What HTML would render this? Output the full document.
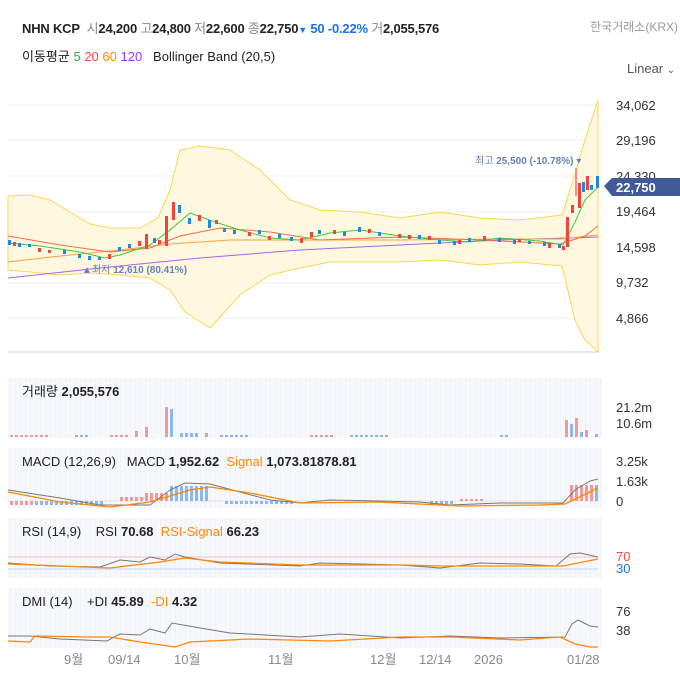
<!DOCTYPE html>
<html><head><meta charset="utf-8"><style>
body{margin:0;width:680px;height:697px;background:#fff;font-family:"Liberation Sans","Noto Sans CJK KR",sans-serif;overflow:hidden;position:relative}
.t{position:absolute;white-space:nowrap;font-size:13px;color:#222}
.g{color:#888;font-weight:normal}.b{font-weight:bold}
</style></head><body>
<div class="t b" style="left:22px;top:18px;font-size:13px;letter-spacing:-0.2px">NHN KCP&nbsp; <span class="g">시</span>24,200 <span class="g">고</span>24,800 <span class="g">저</span>22,600 <span class="g">종</span>22,750<span style="color:#1a73e8;font-size:9px">▼</span> <span style="color:#1a73e8">50 -0.22%</span> <span class="g">거</span>2,055,576</div>
<div class="t" style="right:2px;top:18px;color:#999;font-size:12px">한국거래소(KRX)</div>
<div class="t" style="left:22px;top:46px">이동평균 <span style="color:#2bb52b">5</span> <span style="color:#f44">20</span> <span style="color:#f80">60</span> <span style="color:#93f">120</span>&nbsp;&nbsp; Bollinger Band (20,5)</div>
<div class="t" style="left:627px;top:61px;color:#555">Linear <span style="font-size:10px">⌄</span></div>
<svg width="680" height="697" style="position:absolute;left:0;top:0" font-family="Liberation Sans,sans-serif" font-size="13">
<defs>
<pattern id="pr" width="5" height="10" patternUnits="userSpaceOnUse"><rect x="0" y="0" width="3" height="10" fill="#f19a9a"/></pattern>
<pattern id="pb" width="5" height="10" patternUnits="userSpaceOnUse"><rect x="0" y="0" width="3" height="10" fill="#8ab8f0"/></pattern>
<pattern id="bg" width="5" height="10" patternUnits="userSpaceOnUse"><rect width="5" height="10" fill="#f7f8fc"/><rect x="0" width="1" height="10" fill="#f1f2f8"/></pattern>
</defs>
<g stroke="#eef0f3"><line x1="8" y1="105" x2="598" y2="105"/><line x1="8" y1="140" x2="598" y2="140"/><line x1="8" y1="176" x2="598" y2="176"/><line x1="8" y1="212" x2="598" y2="212"/><line x1="8" y1="247" x2="598" y2="247"/><line x1="8" y1="283" x2="598" y2="283"/><line x1="8" y1="318" x2="598" y2="318"/></g>
<line x1="8" y1="352" x2="598" y2="352" stroke="#ccc"/>
<path d="M8,196 L30,195 L50,200 L70,212 L90,224 L110,228 L140,228 L158,218 L170,190 L180,150 L200,146 L230,150 L260,170 L290,200 L320,210 L360,212 L400,218 L440,212 L480,218 L520,220 L562,215 L570,190 L585,140 L598,100 L598,352 L585,340 L575,320 L562,266 L520,262 L480,265 L440,260 L400,262 L360,262 L330,262 L300,268 L270,275 L240,295 L210,328 L185,312 L170,290 L150,278 L120,275 L90,273 L60,275 L30,272 L8,270 Z" fill="#fff8e1" stroke="#ffd54f" stroke-width="1"/>
<polyline points="8,278 100,268 200,258 300,250 400,245 500,240 598,237" fill="none" stroke="#a463f2" stroke-width="1"/>
<polyline points="8,262 60,256 120,250 170,244 230,240 300,240 400,240 500,239 560,239 598,235" fill="none" stroke="#ffa040" stroke-width="1"/>
<polyline points="8,236 60,245 110,252 150,248 180,236 220,228 270,232 320,240 400,237 480,240 560,244 585,236 598,226" fill="none" stroke="#ff6b3d" stroke-width="1"/>
<polyline points="8,243 40,246 80,252 105,258 120,255 150,245 170,230 190,213 215,222 240,230 270,238 300,240 330,233 360,230 400,236 440,240 470,242 500,238 540,241 563,245 575,222 585,200 598,187" fill="none" stroke="#3cc83c" stroke-width="1"/>
<g fill="#1e88e5">
<rect x="8" y="240" width="3" height="5"/><rect x="18" y="243" width="3" height="4"/><rect x="28" y="244" width="3" height="3"/><rect x="63" y="250" width="3" height="4"/><rect x="78" y="254" width="3" height="4"/><rect x="88" y="256" width="3" height="4"/><rect x="98" y="257" width="3" height="3"/><rect x="118" y="247" width="3" height="4"/><rect x="128" y="244" width="3" height="4"/><rect x="153" y="238" width="3" height="5"/><rect x="178" y="205" width="3" height="8"/><rect x="188" y="218" width="3" height="6"/><rect x="208" y="220" width="3" height="8"/><rect x="223" y="228" width="3" height="4"/><rect x="233" y="230" width="3" height="4"/><rect x="258" y="230" width="3" height="4"/><rect x="278" y="234" width="3" height="4"/><rect x="290" y="237" width="3" height="4"/><rect x="318" y="230" width="3" height="4"/><rect x="343" y="232" width="3" height="4"/><rect x="358" y="227" width="3" height="5"/><rect x="378" y="232" width="3" height="4"/><rect x="418" y="235" width="3" height="4"/><rect x="438" y="240" width="3" height="4"/><rect x="453" y="241" width="3" height="4"/><rect x="468" y="238" width="3" height="4"/><rect x="498" y="238" width="3" height="4"/><rect x="513" y="240" width="3" height="4"/><rect x="528" y="241" width="3" height="3"/><rect x="543" y="242" width="3" height="4"/><rect x="558" y="244" width="3" height="4"/><rect x="582" y="182" width="3" height="10"/><rect x="590" y="185" width="3" height="5"/><rect x="596" y="176" width="3" height="12"/>
</g>
<g fill="#f4433b">
<rect x="13" y="242" width="3" height="4"/><rect x="38" y="248" width="3" height="4"/><rect x="48" y="250" width="3" height="3"/><rect x="108" y="254" width="3" height="5"/><rect x="138" y="241" width="3" height="5"/><rect x="145" y="234" width="3" height="15"/><rect x="158" y="240" width="3" height="4"/><rect x="165" y="216" width="3" height="30"/><rect x="172" y="202" width="3" height="18"/><rect x="198" y="215" width="3" height="6"/><rect x="215" y="220" width="3" height="4"/><rect x="248" y="232" width="3" height="4"/><rect x="268" y="236" width="3" height="4"/><rect x="300" y="238" width="3" height="5"/><rect x="310" y="232" width="3" height="5"/><rect x="333" y="230" width="3" height="4"/><rect x="368" y="229" width="3" height="4"/><rect x="398" y="234" width="3" height="4"/><rect x="408" y="235" width="3" height="4"/><rect x="428" y="236" width="3" height="4"/><rect x="458" y="240" width="3" height="4"/><rect x="483" y="236" width="3" height="5"/><rect x="518" y="239" width="3" height="3"/><rect x="548" y="243" width="3" height="5"/><rect x="562" y="246" width="3" height="4"/><rect x="566" y="217" width="3" height="30"/><rect x="571" y="205" width="3" height="8"/><rect x="575" y="168" width="2" height="28" fill="#f88"/><rect x="578" y="183" width="3" height="25"/><rect x="586" y="176" width="3" height="14"/>
</g>
<text x="475" y="164" font-size="10" fill="#6a7fb5">최고 <tspan font-weight="bold">25,500 (-10.78%)</tspan> ▾</text>
<text x="82" y="273" font-size="10" fill="#6a7fb5">▲최저 <tspan font-weight="bold">12,610 (80.41%)</tspan></text>
<g fill="#333"><text x="616" y="110">34,062</text><text x="616" y="145">29,196</text><text x="616" y="181">24,330</text><text x="616" y="216">19,464</text><text x="616" y="252">14,598</text><text x="616" y="287">9,732</text><text x="616" y="323">4,866</text></g>
<path d="M604,186 L612,178 L680,178 L680,196 L612,196 Z" fill="#3f5a96"/>
<text x="616" y="192" fill="#fff" font-weight="bold">22,750</text>
<g fill="url(#bg)"><rect x="8" y="378" width="594" height="60"/><rect x="8" y="448" width="594" height="60"/><rect x="8" y="518" width="594" height="60"/><rect x="8" y="588" width="594" height="60"/></g>
<text x="22" y="396" fill="#222">거래량 <tspan font-weight="bold">2,055,576</tspan></text>
<g fill="url(#pr)"><rect x="8" y="435" width="40" height="2"/><rect x="110" y="435" width="20" height="2"/><rect x="135" y="431" width="5" height="6"/><rect x="145" y="427" width="5" height="10"/><rect x="165" y="407" width="5" height="30"/><rect x="205" y="433" width="5" height="4"/><rect x="310" y="435" width="25" height="2"/><rect x="565" y="420" width="5" height="17"/><rect x="575" y="418" width="5" height="19"/><rect x="585" y="430" width="5" height="7"/></g>
<g fill="url(#pb)"><rect x="75" y="435" width="15" height="2"/><rect x="220" y="435" width="30" height="2"/><rect x="170" y="409" width="5" height="28"/><rect x="180" y="433" width="20" height="4"/><rect x="350" y="435" width="40" height="2"/><rect x="500" y="435" width="10" height="2"/><rect x="570" y="424" width="5" height="13"/><rect x="580" y="432" width="5" height="5"/><rect x="595" y="434" width="5" height="3"/></g>
<g fill="#333"><text x="616" y="412">21.2m</text><text x="616" y="428">10.6m</text></g>
<text x="22" y="466" fill="#222">MACD (12,26,9)&nbsp;&nbsp; MACD <tspan font-weight="bold">1,952.62</tspan>&nbsp;&nbsp;<tspan fill="#f80">Signal</tspan> <tspan font-weight="bold">1,073.81878.81</tspan></text>
<line x1="8" y1="501" x2="598" y2="501" stroke="#e4e4e4"/>
<g fill="url(#pr)"><rect x="8" y="501" width="25" height="4"/><rect x="120" y="497" width="25" height="4"/><rect x="145" y="493" width="25" height="8"/><rect x="570" y="485" width="25" height="16"/><rect x="255" y="501" width="20" height="3"/><rect x="460" y="499" width="25" height="2"/></g>
<g fill="url(#pb)"><rect x="35" y="501" width="70" height="4"/><rect x="170" y="486" width="40" height="15"/><rect x="225" y="501" width="70" height="3"/><rect x="430" y="501" width="25" height="3"/><rect x="595" y="485" width="5" height="16"/></g>
<polyline points="8,490 60,498 100,505 150,505 170,490 185,483 210,484 240,492 270,500 300,503 330,500 380,501 420,502 450,505 500,503 540,503 563,503 575,490 590,481 598,479" fill="none" stroke="#777" stroke-width="1"/>
<polyline points="8,492 60,502 110,507 150,502 190,490 210,487 250,493 300,503 380,502 460,506 540,505 565,504 598,488" fill="none" stroke="#f80" stroke-width="1.3"/>
<g fill="#333"><text x="616" y="466">3.25k</text><text x="616" y="486">1.63k</text><text x="616" y="506">0</text></g>
<text x="22" y="536" fill="#222">RSI (14,9)&nbsp;&nbsp;&nbsp; RSI <tspan font-weight="bold">70.68</tspan>&nbsp;&nbsp;<tspan fill="#f80">RSI-Signal</tspan> <tspan font-weight="bold">66.23</tspan></text>
<line x1="8" y1="557" x2="598" y2="557" stroke="#f4c0c0"/><line x1="8" y1="569" x2="598" y2="569" stroke="#c0d4f4"/>
<polyline points="8,563 50,566 100,567 120,560 140,562 150,557 165,560 175,554 185,557 220,563 300,566 320,563 360,564 400,565 440,568 480,563 520,564 556,566 570,554 580,553 598,557" fill="none" stroke="#777" stroke-width="1"/>
<polyline points="8,564 60,566 110,568 160,562 185,558 220,562 300,565 400,565 440,566 520,566 563,566 598,559" fill="none" stroke="#f80" stroke-width="1.3"/>
<text x="616" y="561" fill="#f44">70</text><text x="616" y="573" fill="#1a73e8">30</text>
<text x="22" y="606" fill="#222">DMI (14)&nbsp;&nbsp;&nbsp; +DI <tspan font-weight="bold">45.89</tspan>&nbsp;&nbsp;<tspan fill="#f80">-DI</tspan> <tspan font-weight="bold">4.32</tspan></text>
<polyline points="8,636 30,636 60,639 107,641 120,634 140,635 150,629 165,633 172,623 200,628 230,633 300,637 340,634 400,638 450,636 500,638 565,637 572,624 578,620 590,626 598,627" fill="none" stroke="#777" stroke-width="1"/>
<polyline points="8,641 30,642 35,636 90,637 110,637 140,642 175,647 190,642 250,639 330,641 400,637 450,637 520,640 560,637 575,644 590,647 598,647" fill="none" stroke="#f80" stroke-width="1.3"/>
<g fill="#333"><text x="616" y="616">76</text><text x="616" y="635">38</text></g>
<g fill="#888"><text x="64" y="664">9월</text><text x="108" y="664">09/14</text><text x="174" y="664">10월</text><text x="268" y="664">11월</text><text x="370" y="664">12월</text><text x="419" y="664">12/14</text><text x="474" y="664">2026</text><text x="567" y="664">01/28</text></g>
</svg>
</body></html>
